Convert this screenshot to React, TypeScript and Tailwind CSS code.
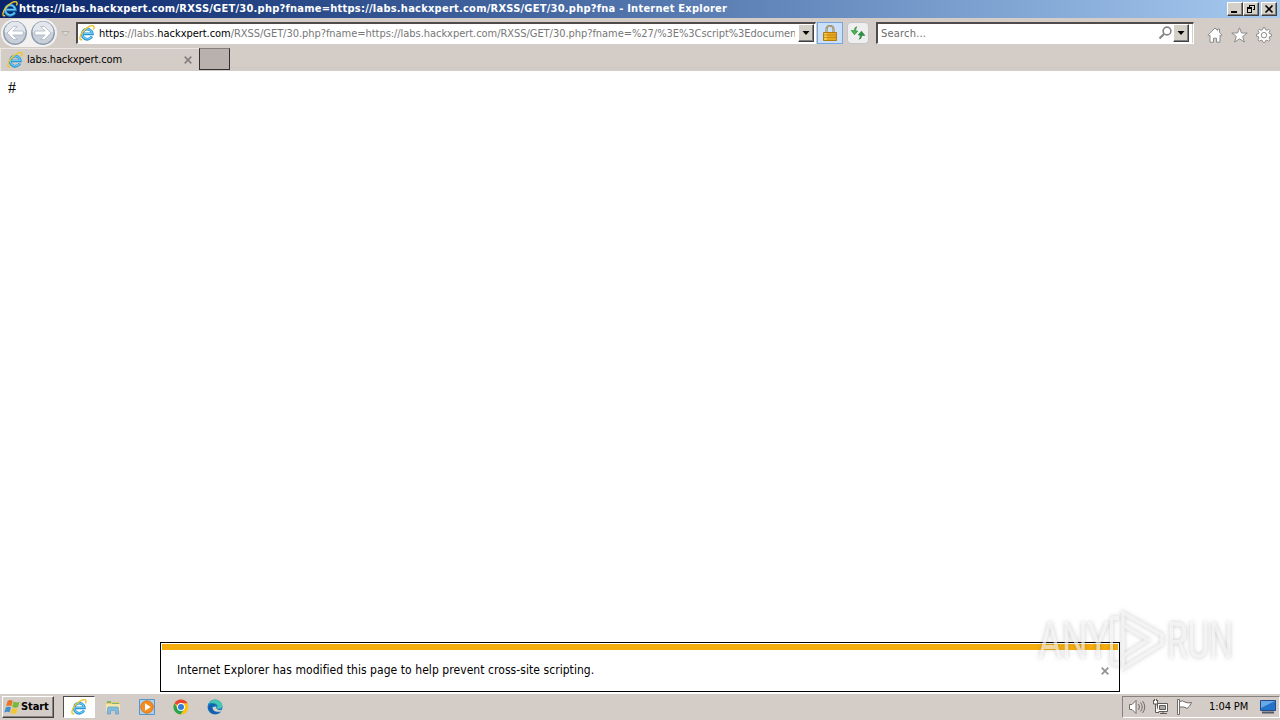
import type { ReactNode } from "react"

const PAGE_URL = "/RXSS/GET/30.php?fname=https://labs.hackxpert.com/RXSS/GET/30.php?fname=%27/%3E%3Cscript%3Edocument"

function IeLogo({ size = 16 }: { size?: number }) {
  return (
    <svg width={size} height={size} viewBox="0 0 16 16" className="shrink-0">
      <path d="M12.9 11.4A5.1 5.1 0 1 1 13.4 8.8H4.5" fill="none" stroke="#2b94d3" strokeWidth="2.7" />
      <path d="M12.6 11.4A5 5 0 1 1 13.2 8.5H4.5" fill="none" stroke="#6fcdf5" strokeWidth="1.1" />
      <path
        d="M3.2 14.6C-.2 15.8.2 10.8 4.2 6.3 8 2 13.6-.8 14.8 1.4c.5.9.2 2-.4 3.1"
        fill="none"
        stroke="#edc52c"
        strokeWidth="1.4"
      />
    </svg>
  )
}

function NavButton({ flip = false }: { flip?: boolean }) {
  return (
    <svg width="28" height="28" viewBox="0 0 28 28" className={flip ? "-scale-x-100 shrink-0" : "shrink-0"}>
      <circle cx="14" cy="14" r="12.5" fill="#f5f5f6" stroke="#f2f1f0" strokeWidth="2" />
      <circle cx="14" cy="14" r="11.2" fill="#c9d0d9" stroke="#8f9daf" strokeWidth="1.4" />
      <path d="M3.5 13a10.5 10.5 0 0 1 21 0Q14 16 3.5 13Z" fill="#e4e8ed" />
      <path d="M6 14l6.6-6.6h3.8L11.8 12h10.4v4H11.8l4.6 4.6h-3.8Z" fill="#fff" stroke="#aab4c2" strokeWidth=".8" />
    </svg>
  )
}

function DropButton() {
  return (
    <div className="grid h-[18px] w-4 shrink-0 place-items-center border border-t-white border-r-[#404040] border-b-[#404040] border-l-white bg-[#d4d0c8] shadow-[inset_-1px_-1px_#808080]">
      <svg width="8" height="4" viewBox="0 0 8 4">
        <path d="M.5 0h7L4 4Z" fill="#000" />
      </svg>
    </div>
  )
}

function CaptionButton({ children }: { children: ReactNode }) {
  return (
    <div className="grid h-[14px] w-4 place-items-center border border-t-white border-r-[#404040] border-b-[#404040] border-l-white bg-[#d4d0c8] shadow-[inset_-1px_-1px_#808080]">
      <svg width="12" height="10" viewBox="0 0 12 10" fill="none" stroke="#000" shapeRendering="crispEdges">
        {children}
      </svg>
    </div>
  )
}

function TitleBar() {
  return (
    <header className="flex h-[18px] items-center bg-gradient-to-r from-[#0a246a] to-[#a6caf0] pr-[3px] pl-[2px]">
      <IeLogo />
      <span className="ml-px flex-1 text-[11px] leading-[18px] font-bold tracking-[0.24px] whitespace-nowrap text-white">
        https://labs.hackxpert.com/RXSS/GET/30.php?fname=https://labs.hackxpert.com/RXSS/GET/30.php?fna - Internet Explorer
      </span>
      <div className="flex">
        <CaptionButton>
          <path d="M2 8h6" strokeWidth="2" />
        </CaptionButton>
        <CaptionButton>
          <path d="M4 1.5h6M4.5 1v3M9.5 1v5M8 5.5h2M2 4.5h5M2 3.5h5M2.5 4v5M6.5 4v5M2 8.5h5" />
        </CaptionButton>
        <div className="w-[2px]" />
        <CaptionButton>
          <path d="M2.5 1.5l7 7M9.5 1.5l-7 7" strokeWidth="1.6" shapeRendering="auto" />
        </CaptionButton>
      </div>
    </header>
  )
}

function Toolbar() {
  return (
    <div className="flex h-[30px] items-start pt-[4px]">
      <div className="-mt-[3px] ml-px flex rounded-full bg-[#f2f1f0]">
        <NavButton />
        <NavButton flip />
      </div>
      <svg width="9" height="6" viewBox="0 0 9 6" className="mt-[9px] ml-[4px] shrink-0">
        <path d="M.8.5h7.4L4.5 4.8Z" fill="#dedad5" stroke="#b4b0ab" />
      </svg>

      <div className="ml-[6px] flex h-[22px] w-[740px] border-t-2 border-r border-b border-l-2 border-t-[#504c4c] border-r-white border-b-white border-l-[#504c4c] bg-white pl-px">
        <div className="mt-px">
          <IeLogo />
        </div>
        <div className="ml-[4px] w-[696px] overflow-hidden text-[11px] leading-[20px] tracking-[-0.045px] whitespace-nowrap text-[#777]">
          <span className="text-black">https</span>://labs.<span className="text-black">hackxpert.com</span>
          {PAGE_URL}
        </div>
        <div className="ml-auto pr-px">
          <DropButton />
        </div>
      </div>

      <div className="ml-px grid h-[22px] w-[26px] shrink-0 place-items-center border border-[#72a6e4] bg-[#c9dffa]">
        <svg width="14" height="17" viewBox="0 0 14 17">
          <path d="M3.5 8V4a3.5 3.2 0 0 1 7 0v4" fill="none" stroke="#8c7950" strokeWidth="2" />
          <path d="M3.5 8V4a3.5 3.2 0 0 1 7 0v4" fill="none" stroke="#d8cda8" strokeWidth=".7" />
          <path d="M.5 7.5h13v8H.5Z" fill="#e9aa20" stroke="#b17a13" />
          <path d="M2 8v7M3 8v7" stroke="#ffdc62" />
          <path d="M1 10h12M1 12.5h12" stroke="#ba7c12" strokeWidth=".7" />
        </svg>
      </div>
      <div className="ml-[4px] grid h-[22px] w-[22px] shrink-0 place-items-center rounded-sm border border-[#c4c6c9] bg-[#eeeeef]">
        <svg width="16" height="14" viewBox="0 0 16 14">
          <path d="M6.8.8Q4.6 1 4.3 4.5H1.2L4.5 8.8 7.8 5.2 5.7 4.8Q5.6 2.5 6.8.8Z" fill="#46b54b" stroke="#28863b" strokeWidth=".6" />
          <path d="M9.2 13.2q2.2-.2 2.5-3.8h3.1L11.5 5.2 8.2 8.9l2.1.3q.1 2.3-1.1 4Z" fill="#289440" stroke="#21793a" strokeWidth=".6" />
        </svg>
      </div>

      <div className="ml-[7px] flex h-[22px] w-[318px] shrink-0 border-t-2 border-r border-b border-l-2 border-t-[#504c4c] border-r-white border-b-white border-l-[#504c4c] bg-white">
        <span className="ml-[3px] text-[11px] leading-[20px] tracking-[0.2px] text-[#6c6c6c]">Search...</span>
        <svg width="15" height="15" viewBox="0 0 15 15" className="mt-[2px] ml-auto">
          <circle cx="9" cy="5" r="3.9" fill="none" stroke="#858585" strokeWidth="1.6" />
          <path d="M6 8L1.5 12.5" stroke="#858585" strokeWidth="2.2" />
        </svg>
        <DropButton />
        <div className="w-[4px] border-r border-[#d4d0c8]" />
      </div>

      <div className="mt-[5px] ml-[13px] flex gap-[8px]">
        <svg width="16" height="16" viewBox="0 0 16 16" fill="#fff" stroke="#8b8b8b">
          <path d="M1 8.2L8 1l2.5 2.5V2h2v3.5L15 8.2l-1 1-1-.9v6.9H9.5v-4h-3v4H3V8.3l-1 .9Z" />
        </svg>
        <svg width="17" height="16" viewBox="0 0 17 16" fill="#fff" stroke="#8b8b8b">
          <path d="M8.5.8l2 5.2h5.7l-4.5 3.5 1.7 5.6-4.9-3.3-4.9 3.3 1.7-5.6L.8 6h5.7Z" />
        </svg>
        <svg width="16" height="16" viewBox="0 0 16 16" fill="#fff" stroke="#8b8b8b">
          <path d="M7 .7h2l.5 2 1.4.6 1.8-1.1 1.4 1.4L13 5.4l.6 1.4 2 .4v2l-2 .4-.6 1.4 1.1 1.8-1.4 1.4-1.8-1.1-1.4.6-.5 2H7l-.5-2-1.4-.6-1.8 1.1-1.4-1.4L3 11l-.6-1.4-2-.4v-2l2-.4L3 5.4 1.9 3.6l1.4-1.4 1.8 1.1 1.4-.6Z" />
          <circle cx="8" cy="8.2" r="2.7" />
        </svg>
      </div>
    </div>
  )
}

function TabStrip() {
  return (
    <div className="flex h-[23px]">
      <div className="flex h-full w-[199px] items-center border-t border-l border-[#eae7e3] pl-[6px]">
        <IeLogo />
        <span className="mt-px ml-[4px] text-[11px] tracking-[-0.13px]">labs.hackxpert.com</span>
        <svg width="8" height="8" viewBox="0 0 8 8" className="mr-[7px] ml-auto">
          <path d="M.7.7l6.6 6.6M7.3.7L.7 7.3" stroke="#858180" strokeWidth="1.7" />
        </svg>
      </div>
      <div className="h-[22px] w-[31px] border border-t-[#837d7b] border-r-[#332f2f] border-b-[#332f2f] border-l-[#332f2f] bg-[#b9b1ad]" />
      <div className="mt-[19px] h-px flex-1 bg-[#cdc8c4]" />
    </div>
  )
}

function Notification() {
  return (
    <div className="h-[50px] w-[960px] border border-black bg-white p-px">
      <div className="h-[6px] bg-[#f5ad0c]" />
      <div className="flex h-[40px] items-center justify-between pr-[9px] pl-[15px]">
        <span className="text-[12px] tracking-[0.06px]">
          Internet Explorer has modified this page to help prevent cross-site scripting.
        </span>
        <svg width="8" height="8" viewBox="0 0 8 8" className="mt-px">
          <path d="M.7.7l6.6 6.6M7.3.7L.7 7.3" stroke="#929292" strokeWidth="1.7" />
        </svg>
      </div>
    </div>
  )
}

function Watermark() {
  return (
    <div className="absolute top-[607px] left-[1038px] flex h-[66px] w-[200px] items-center text-white/60 drop-shadow-[0_0_2px_rgba(80,80,80,0.5)]">
      <span className="mt-[2px] w-[72px] origin-left scale-x-[0.73] font-['Roboto'] text-[50px] leading-[66px]">ANY</span>
      <svg width="57" height="66" viewBox="0 0 57 66" fill="none" stroke="currentColor" strokeWidth="4" className="shrink-0">
        <path d="M9 11H5q-4 0-4 5v36q0 5 4 5h4" />
        <path d="M13 18V6l39 22v9L13 61V49l25-16L13 18v31" strokeWidth="3.5" />
      </svg>
      <span className="mt-[2px] origin-left scale-x-[0.67] font-['Roboto'] text-[50px] leading-[66px]">RUN</span>
    </div>
  )
}

function TaskIcons() {
  return (
    <div className="flex items-center">
      <div className="ml-[9px] grid h-[22px] w-[32px] place-items-center border border-t-[#504c4c] border-r-white border-b-white border-l-[#504c4c] bg-white">
        <IeLogo />
      </div>
      <svg width="16" height="16" viewBox="0 0 16 16" className="ml-[10px]">
        <path d="M1 2h5l1 1h8v9H1Z" fill="#e4ca71" />
        <path d="M2 3h4M7 5h7" stroke="#57ae81" strokeWidth="1.5" />
        <path d="M1 5h14v7H1Z" fill="#f3e6a6" />
        <path d="M2.5 15V9.5q0-1.5 1.5-1.5h8q1.5 0 1.5 1.5V15h-3v-3.5h-5V15Z" fill="#7fbae2" stroke="#609dc5" strokeWidth=".7" />
      </svg>
      <svg width="16" height="16" viewBox="0 0 16 16" className="ml-[18px]">
        <path d="M.5.5h15v15H.5Z" fill="#a8d2f0" stroke="#5695c9" />
        <circle cx="8" cy="8" r="6.2" fill="#f68b1f" stroke="#dd761a" />
        <path d="M6 4.2L11.7 8 6 11.8Z" fill="#fff" />
      </svg>
      <svg width="16" height="16" viewBox="0 0 16 16" className="ml-[18px]">
        <circle cx="8" cy="8" r="7.5" fill="#fbc116" />
        <path d="M8 8L1.5 4.2A7.5 7.5 0 0 1 14.5 4.2H8Z" fill="#e64435" />
        <path d="M1.5 4.2A7.5 7.5 0 0 0 7.6 15.5L11.2 9.9 4.8 9.9Z" fill="#28a352" />
        <circle cx="8" cy="8" r="3.9" fill="#fff" />
        <circle cx="8" cy="8" r="3" fill="#337cde" />
      </svg>
      <svg width="16" height="16" viewBox="0 0 16 16" className="ml-[18px]">
        <circle cx="8" cy="8" r="7.5" fill="#147cc3" />
        <path d="M1 5.2C4-.6 12-1 15 4.8c1.4 3-1 5.9-4.5 4.8-1.6-.5.7-1.5-.3-3.3C8.7 3.6 3.7 3.1 1 5.2Z" fill="#45c6ae" />
        <path d="M5.3 8.2c0 3.8 4.5 5.6 8.8 4.2l1.1-1.8c-3.2 1.4-6.3.2-6.1-3Z" fill="#d4d0c8" />
        <path d="M5.3 8.2c0 3.9 4.5 6.4 8.2 4.7-4.8 4.8-12.9.7-12.2-5.4 1.8-3.1 7.3-3.3 8.8-.6C7.6 5.8 5.4 6.5 5.3 8.2Z" fill="#155fae" />
      </svg>
    </div>
  )
}

function Taskbar() {
  return (
    <footer className="flex h-[27px] items-center border-t border-white bg-[#d4cdc7] pl-[2px]">
      <div className="flex h-[22px] w-[52px] items-center border border-t-white border-r-[#404040] border-b-[#404040] border-l-white pl-px shadow-[inset_-1px_-1px_#8a8581]">
        <svg width="17" height="17" viewBox="0 0 17 17">
          <path d="M3.7 2Q6.3.2 8.7 2L7.3 7.2Q4.6 5.9 2.1 7.5Z" fill="#e87424" />
          <path d="M9.7 2.6q2.5 1.6 5.8.1L14 8.1q-3 1.3-5.7-.3Z" fill="#76b936" />
          <path d="M1.8 8.5q2.6-1.6 5.2-.2L5.6 13.2Q3 12 .3 13.4Z" fill="#438fcb" />
          <path d="M8 9q2.7 1.5 5.7.2l-1.4 5q-2.9 1.4-5.6-.3Z" fill="#f5c72f" />
        </svg>
        <span className="mt-px text-[11px] font-bold tracking-[-0.1px]">Start</span>
      </div>
      <TaskIcons />
      <div className="ml-auto flex h-[22px] w-[158px] items-center border border-t-[#88827e] border-r-white border-b-white border-l-[#88827e] pl-[5px]">
        <svg width="18" height="16" viewBox="0 0 18 16" fill="#fff" stroke="#716c69">
          <path d="M1.5 5.5H4l4-4v13l-4-4H1.5Z" />
          <path d="M10.5 5q2 3 0 6M12.5 3.5q3.5 4.5 0 9M14.5 2q4.5 6 0 12" fill="none" />
        </svg>
        <svg width="17" height="16" viewBox="0 0 17 16" fill="#fff" stroke="#5f5b59" className="ml-[6px]">
          <path d="M5.5 4.5h10v8h-10Z" />
          <path d="M7.5 6.5h6v4h-6Z" fill="#aaa6a2" />
          <path d="M8 14.5h7M11 12v3" />
          <path d="M1.5 1v4h4V1M3.5 5v8.5H7M2.5 0v2M4.5 0v2" />
        </svg>
        <svg width="17" height="16" viewBox="0 0 17 16" fill="#fff" stroke="#716c69" className="ml-[7px]">
          <path d="M1.5.5h2v15h-2Z" />
          <path d="M3.5 2.5q3-1.5 5.5.5 2.5 1.5 6.5.5-1.5 4-4.5 6-2-1.5-4-1.5H3.5Z" />
        </svg>
        <span className="mt-px ml-[16px] text-[11px] tracking-[-0.1px] whitespace-nowrap">1:04 PM</span>
        <svg width="16" height="14" viewBox="0 0 16 14" className="mr-[3px] ml-auto">
          <path d="M.5.5h15v10H.5Z" fill="#2473cb" stroke="#284b85" />
          <path d="M1 1h14L1 8Z" fill="#67a8e7" />
          <path d="M2 12.5h12" stroke="#505869" strokeWidth="2" />
        </svg>
      </div>
    </footer>
  )
}

export default function App() {
  return (
    <div className="relative flex h-[720px] w-[1280px] flex-col overflow-hidden bg-[#d4cdc7] font-['DejaVu_Sans_Condensed','DejaVu_Sans',sans-serif] text-black">
      <TitleBar />
      <Toolbar />
      <TabStrip />
      <main className="flex flex-1 flex-col items-center bg-white">
        <p className="w-full pt-[7px] pl-[8px] font-['Liberation_Serif',serif] text-[16px] leading-[20px]">#</p>
        <div className="mt-auto mb-px">
          <Notification />
        </div>
      </main>
      <Taskbar />
      <Watermark />
    </div>
  )
}
